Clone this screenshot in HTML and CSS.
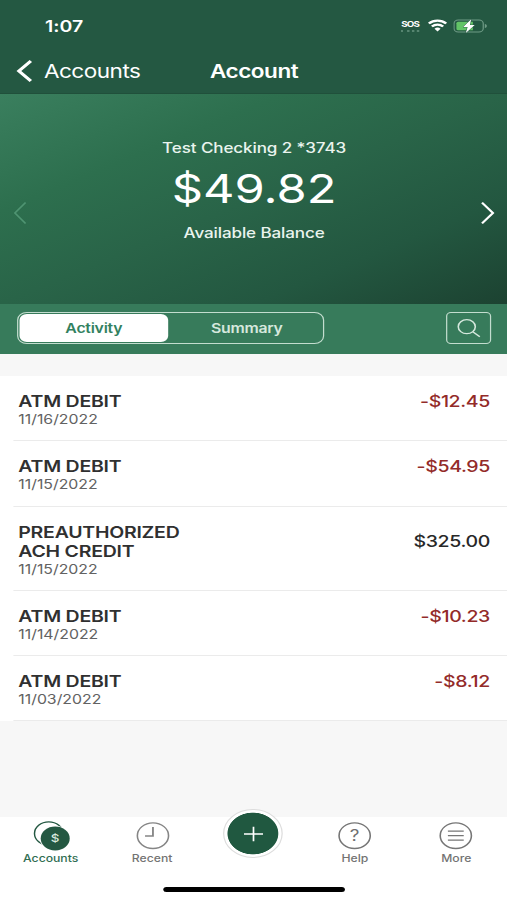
FILE: index.html
```html
<!DOCTYPE html>
<html lang="en">
<head>
  <meta charset="UTF-8" />
  <meta name="viewport" content="width=device-width, initial-scale=1.0"/>
  <title>Account</title>
  <link rel="stylesheet" href="styles.css">
</head>
<body>

  <div class="screen">
    <header class="header">
      <div class="status">
        <span class="time">1:07</span>
        <div class="status-icons">
          <span class="sos">SOS</span>
          <svg class="wifi" width="16" height="13" viewBox="0 0 16 13" fill="none" stroke="#fff" stroke-width="2.2">
            <path d="M.9 4.5a10.2 10.2 0 0 1 14.2 0M3.4 7.5a6.6 6.6 0 0 1 9.2 0"/>
            <path d="M8 12.4 5.5 9.8a3.6 3.6 0 0 1 5 0z" fill="#fff" stroke="none"/>
          </svg>
          <svg class="battery" width="28" height="14" viewBox="0 0 28 14">
            <rect x=".5" y="1" width="24" height="12" rx="3.5" fill="none" stroke="#6f9b86"/>
            <path d="M4 2.8h12v8.4H4a1.5 1.5 0 0 1-1.5-1.5V4.3A1.5 1.5 0 0 1 4 2.8z" fill="#62c466"/>
            <path d="M25.8 5v4c1.2-.4 1.7-1.2 1.7-2s-.5-1.6-1.7-2z" fill="#6f9b86"/>
            <path d="M14.6.3 8 7.9h3.7l-1.5 6 7.3-7.8h-3.9z" fill="#fff" stroke="#245842" stroke-width=".8" paint-order="stroke"/>
          </svg>
        </div>
      </div>
      <div class="navbar">
        <a class="back" href="#">
          <svg width="14" height="24" viewBox="0 0 14 24" fill="none" stroke="#fff" stroke-width="2.8"><path d="M12.3 2 2.5 12l9.8 10"/></svg>
          <span>Accounts</span>
        </a>
        <h1>Account</h1>
      </div>
    </header>

    <section class="hero">
      <svg class="prev" width="12" height="24" viewBox="0 0 12 24" fill="none" stroke="#4f9472" stroke-width="1.4"><path d="M10 1.5 1.2 12l8.8 10.5"/></svg>
      <div class="balance">
        <p class="account-name">Test Checking 2 *3743</p>
        <p class="amount">$49.82</p>
        <p class="caption">Available Balance</p>
      </div>
      <svg class="next" width="12" height="24" viewBox="0 0 12 24" fill="none" stroke="#fff" stroke-width="1.9"><path d="M1.5 1.7 10.5 12l-9 10.3"/></svg>
    </section>

    <div class="toolbar">
      <div class="segmented">
        <button class="segment active">Activity</button>
        <button class="segment">Summary</button>
      </div>
      <button class="search" aria-label="Search">
        <svg width="20" height="20" viewBox="0 0 20 20" fill="none" stroke="#d5e8dd" stroke-width="1.3"><circle cx="8" cy="8.7" r="7"/><path d="m12.9 13.7 5.8 5"/></svg>
      </button>
    </div>

    <ul class="transactions">
      <li>
        <div><h2>ATM DEBIT</h2><p class="date">11/16/2022</p></div>
        <span class="value debit">-$12.45</span>
      </li>
      <li>
        <div><h2>ATM DEBIT</h2><p class="date">11/15/2022</p></div>
        <span class="value debit">-$54.95</span>
      </li>
      <li class="tall">
        <div><h2>PREAUTHORIZED<br>ACH CREDIT</h2><p class="date">11/15/2022</p></div>
        <span class="value">$325.00</span>
      </li>
      <li>
        <div><h2>ATM DEBIT</h2><p class="date">11/14/2022</p></div>
        <span class="value debit">-$10.23</span>
      </li>
      <li>
        <div><h2>ATM DEBIT</h2><p class="date">11/03/2022</p></div>
        <span class="value debit">-$8.12</span>
      </li>
    </ul>

    <nav class="tabbar">
      <a class="tab current" href="#">
        <svg width="32" height="32" viewBox="0 0 32 32">
          <circle cx="14" cy="13.5" r="11.7" fill="#fff" stroke="#245842" stroke-width="1.2"/>
          <circle cx="19.3" cy="18.5" r="12.7" fill="#fff"/>
          <circle cx="19.3" cy="18.5" r="11.9" fill="#245842"/>
          <text class="coin" x="19.3" y="22.3" text-anchor="middle">$</text>
        </svg>
        <span>Accounts</span>
      </a>
      <a class="tab" href="#">
        <svg width="32" height="32" viewBox="0 0 32 32" fill="none" stroke="#858585" stroke-width="1.3">
          <circle cx="16.5" cy="15.7" r="12.8"/><path d="M16.5 7v9H10" stroke-width="1.5"/>
        </svg>
        <span>Recent</span>
      </a>
      <div class="tab">
        <button class="add" aria-label="Add">
          <svg width="18" height="18" viewBox="0 0 18 18" stroke="#fff" stroke-width="1.4"><path d="M9 1.8v14.4M1.2 9h15.6"/></svg>
        </button>
      </div>
      <a class="tab" href="#">
        <svg width="32" height="32" viewBox="0 0 32 32" fill="none" stroke="#767676" stroke-width="1.3">
          <circle cx="16" cy="15.7" r="12.8"/>
          <text class="mark" x="16" y="21.2" text-anchor="middle">?</text>
        </svg>
        <span>Help</span>
      </a>
      <a class="tab" href="#">
        <svg width="32" height="32" viewBox="0 0 32 32" fill="none" stroke="#767676" stroke-width="1.3">
          <circle cx="16" cy="15.7" r="12.8"/><path d="M9.5 11.2h13M9.5 15.7h13M9.5 20.2h13"/>
        </svg>
        <span>More</span>
      </a>
      <div class="home-indicator"></div>
    </nav>
  </div>

</body>
</html>
```

FILE: styles.css
```css
* {
  box-sizing: border-box;
  margin: 0;
  padding: 0;
}

body {
  width: 507px;
  height: 900px;
  overflow: hidden;
  background: #f7f7f7;
  font-family: Inter, "Liberation Sans", sans-serif;
  font-feature-settings: "calt" 0;
}

/* wide display: the 416px layout is stretched sideways */
.screen {
  width: 416px;
  height: 900px;
  display: flex;
  flex-direction: column;
  background: #f7f7f7;
  transform: scaleX(1.21875);
  transform-origin: 0 0;
}

a {
  color: inherit;
  text-decoration: none;
}

button {
  font-family: inherit;
  border: none;
  background: none;
}

svg {
  display: block;
}

.header {
  height: 94px;
  background: #245842;
  border-bottom: 1px solid #20503b;
  color: #fff;
}

.status {
  height: 51px;
  padding: 0 16px 0 37px;
  display: flex;
  align-items: center;
  justify-content: space-between;
}

.time {
  font-size: 16px;
  font-weight: 600;
}

.status-icons {
  display: flex;
  align-items: center;
  gap: 5px;
}

.sos {
  font-size: 8px;
  font-weight: 700;
  line-height: 9px;
  letter-spacing: -0.6px;
  padding-bottom: 1px;
  border-bottom: 2px dotted #568570;
}

.wifi {
  margin-left: 2px;
}

.navbar {
  height: 39px;
  display: grid;
  grid-template-columns: 1fr auto 1fr;
  align-items: center;
}

.back {
  display: flex;
  align-items: center;
  gap: 9px;
  padding-left: 13px;
  font-size: 18.5px;
  letter-spacing: -0.4px;
}

.navbar h1 {
  padding-left: 1px;
  font-size: 18.5px;
  font-weight: 600;
  letter-spacing: -0.4px;
}

.hero {
  height: 210px;
  padding: 0 10px 0 11px;
  display: flex;
  justify-content: space-between;
  background: linear-gradient(to bottom right, #3a7f5e 0%, #2d6f4e 28%, #296448 50%, #235740 75%, #1c4231 100%);
  color: #fff;
}

.prev,
.next {
  margin-top: 107px;
}

.balance {
  padding-top: 44px;
  text-align: center;
}

.account-name,
.caption {
  font-size: 14px;
  font-weight: 500;
  line-height: 20px;
  letter-spacing: -0.1px;
  color: #eaf4ee;
}

.amount {
  font-size: 40px;
  line-height: 50px;
  margin: 6px 0 9px;
}

.toolbar {
  height: 50px;
  padding: 0 13px 2px 14px;
  display: flex;
  align-items: center;
  justify-content: space-between;
  background: #377b5b;
}

.segmented {
  width: 252px;
  height: 32px;
  padding: 1px;
  display: grid;
  grid-template-columns: 122px 1fr;
  border: 1px solid #c3ddcf;
  border-radius: 8px;
}

.segment {
  padding-left: 3px;
  font-size: 13px;
  font-weight: 600;
  letter-spacing: -0.2px;
  color: #d5e8dd;
  border-radius: 6px;
}

.segment.active {
  padding-left: 0;
  background: #fff;
  color: #32815f;
}

.search {
  width: 37px;
  height: 32px;
  display: flex;
  align-items: center;
  justify-content: center;
  border: 1px solid #c3ddcf;
  border-radius: 4px;
}

.transactions {
  margin-top: 22px;
  list-style: none;
  background: #fff;
}

.transactions li {
  height: 65.3px;
  margin-left: 11px;
  padding: 0 14px 0 4px;
  display: flex;
  justify-content: space-between;
  border-bottom: 1px solid #ebebeb;
}

.transactions li.tall {
  height: 84px;
}

.transactions h2 {
  padding-top: 16px;
  font-size: 16px;
  font-weight: 600;
  line-height: 19px;
  letter-spacing: -0.2px;
  color: #303030;
}

.date {
  font-size: 13px;
  line-height: 17px;
  color: #626262;
}

.value {
  padding-top: 15px;
  font-size: 16px;
  font-weight: 500;
  line-height: 20px;
  letter-spacing: -0.3px;
  color: #282828;
}

.tall .value {
  padding-top: 24px;
}

.value.debit {
  color: #932b29;
}

.tabbar {
  position: relative;
  height: 83px;
  margin-top: auto;
  display: grid;
  grid-template-columns: repeat(5, 1fr);
  background: #fff;
}

.tab {
  padding-top: 3px;
  display: flex;
  flex-direction: column;
  align-items: center;
  font-size: 10px;
  font-weight: 500;
  line-height: 13px;
  color: #737373;
}

.tab.current {
  color: #2f6d52;
}

.coin {
  font-size: 11px;
  font-weight: 500;
  fill: #d8eadf;
}

.mark {
  font-size: 15.5px;
  font-weight: 400;
  fill: #707070;
  stroke: none;
}

.add {
  width: 49px;
  height: 49px;
  flex: none;
  margin-top: -11px;
  display: flex;
  align-items: center;
  justify-content: center;
  border: 1px solid #ddd;
  border-radius: 50%;
  background: radial-gradient(circle, #205840 20.5px, #fff 21.2px);
}

.home-indicator {
  position: absolute;
  left: 134px;
  bottom: 8px;
  width: 149px;
  height: 5px;
  border-radius: 3px;
  background: #000;
}
```
